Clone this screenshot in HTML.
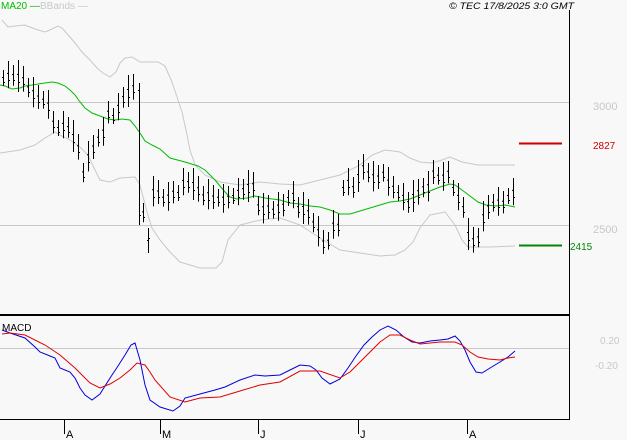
<!DOCTYPE html>
<html><head><meta charset="utf-8"><style>
html,body{margin:0;padding:0;background:#f8f8f8;}
svg{display:block;}
text{font-family:"Liberation Sans",sans-serif;}
</style></head><body>
<svg id="s" width="627" height="440" viewBox="0 0 627 440" xmlns="http://www.w3.org/2000/svg">
<rect width="627" height="440" fill="#f8f8f8"/>
<line x1="0" y1="102.5" x2="569" y2="102.5" stroke="#c8c8c8"/>
<line x1="0" y1="225.5" x2="569" y2="225.5" stroke="#c8c8c8"/>
<line x1="0" y1="348.5" x2="569" y2="348.5" stroke="#c8c8c8"/>
<polyline fill="none" stroke="#c8c8c8" points="2,20 8,27 15,26 25,25 35,29 45,32 52,29 58,26 62,28 70,37 75,43 82,52 90,60 97,68 103,73 110,77 116,72 120,63 125,58 132,57 140,62 158,62 165,66 172,82 178,100 182,112 186,130 190,150 195,165 205,175 220,182 240,185 260,182 280,184 300,185 320,180 340,175 360,165 372,155 385,150 400,152 410,158 420,162 432,163 442,160 450,157 462,162 478,165 515,165"/>
<polyline fill="none" stroke="#c8c8c8" points="0,153 20,150 35,145 45,138 55,132 60,135 70,140 80,147 88,155 95,170 100,180 110,182 120,178 135,177 140,185 147,212 152,228 160,240 170,252 180,262 200,268 216,268 222,262 228,240 240,225 260,220 280,218 300,225 320,238 340,250 360,253 380,256 395,255 405,250 413,242 420,228 430,215 445,212 455,225 462,240 468,247 490,247 515,246"/>
<polyline fill="none" stroke="#00bb00" points="0,85 5,86 12,89 20,88 25,86 32,85 38,84 45,83 52,82 58,83 65,86 70,90 75,95 80,102 85,108 92,113 100,116 108,119 115,120 122,119 130,120 135,126 140,133 145,141 152,145 160,149 170,158 185,162 198,166 205,170 215,180 225,192 230,197 237,199 247,198 255,196 265,198 280,200 290,203 300,204 310,206 320,207 330,210 340,214 350,214 360,211 370,208 380,205 390,202 400,201 410,199 420,195 430,191 440,187 450,184 455,185 462,190 470,196 478,202 486,205 496,206 505,205 515,207"/>
<g id="bars" stroke="#000" fill="none"></g>
<polyline fill="none" stroke="#0000dd" points="2,330 10,333 25,338 35,347 40,352 50,356 55,358 60,368 70,372 75,378 80,388 85,395 92,400 100,394 105,386 112,375 118,366 125,355 131,345 135,343 140,360 145,385 150,400 160,407 173,411 180,406 185,398 200,394 215,390 225,387 240,380 255,375 265,376 280,375 290,370 300,365 310,366 316,370 322,378 330,384 340,379 348,368 356,356 364,345 372,337 380,330 388,326 396,330 404,337 412,342 420,343 430,341 440,340 448,339 455,336 460,341 465,350 470,362 476,372 482,373 490,368 500,362 508,357 515,351"/>
<polyline fill="none" stroke="#dd0000" points="2,334 10,333 25,335 45,345 60,355 75,368 90,383 100,388 110,384 120,378 130,370 137,363 145,365 150,372 155,380 170,397 185,402 200,398 220,397 240,391 260,385 280,382 300,371 320,371 340,378 350,372 360,362 370,352 380,342 390,335 400,335 410,340 420,344 440,342 455,342 462,345 470,352 478,357 488,359 500,360 508,358 515,357"/>
<line x1="0" y1="315" x2="569" y2="315" stroke="#000" stroke-width="2"/>
<line x1="569.5" y1="10" x2="569.5" y2="420" stroke="#000"/>
<line x1="0" y1="419.5" x2="569" y2="419.5" stroke="#000"/>
<g stroke="#000"><line x1="64.5" y1="419" x2="64.5" y2="434"/><line x1="160.5" y1="419" x2="160.5" y2="434"/><line x1="258.5" y1="419" x2="258.5" y2="434"/><line x1="358.5" y1="419" x2="358.5" y2="434"/><line x1="467.5" y1="419" x2="467.5" y2="434"/></g>
<g font-size="11" fill="#000"><text x="66" y="438">A</text><text x="162" y="438">M</text><text x="260" y="438">J</text><text x="360" y="438">J</text><text x="469" y="438">A</text></g>
<line x1="519" y1="143.5" x2="562" y2="143.5" stroke="#cc0000" stroke-width="2"/>
<line x1="519" y1="245.5" x2="562" y2="245.5" stroke="#008800" stroke-width="2"/>
<text x="593" y="149" font-size="10" fill="#cc0000">2827</text>
<text x="570" y="250" font-size="10" fill="#008800">2415</text>
<text x="593" y="110" font-size="11" fill="#c8c8c8">3000</text>
<text x="593" y="233" font-size="11" fill="#c8c8c8">2500</text>
<text x="600" y="344" font-size="10" fill="#c8c8c8">0.20</text>
<text x="595" y="369" font-size="10" fill="#c8c8c8">-0.20</text>
<text x="2" y="331" font-size="10" fill="#000">MACD</text>
<text x="1" y="9" font-size="10" fill="#00bb00">MA20 —</text>
<text x="40" y="9" font-size="10" fill="#c8c8c8">BBands —</text>
<text x="449" y="9" font-size="9" font-style="italic" fill="#000" textLength="125" lengthAdjust="spacingAndGlyphs">© TEC 17/8/2025 3:0 GMT</text>
</svg>
<script>
var mids=[[3,80],[8,78],[13,78],[18,80],[23,82],[28,90],[33,96],[38,100],[43,102],[48,108],[53,125],[58,130],[63,128],[68,130],[73,140],[78,150],[83,175],[88,160],[93,150],[98,140],[103,135],[108,115],[113,118],[118,110],[123,100],[128,95],[133,90],[143,215],[153,195],[158,195],[163,200],[168,200],[173,195],[178,195],[183,185],[188,185],[193,188],[198,192],[203,198],[208,198],[213,200],[218,200],[223,202],[228,200],[233,198],[238,195],[243,192],[248,190],[253,188],[258,208],[263,212],[268,210],[273,212],[278,210],[283,208],[288,200],[293,198],[298,210],[303,212],[308,215],[313,225],[318,235],[323,245],[328,243],[333,228],[338,228],[343,190],[348,185],[353,190],[358,180],[363,170],[368,175],[373,180],[378,180],[383,175],[388,185],[393,190],[398,195],[403,200],[408,205],[413,200],[418,195],[423,190],[428,190],[433,175],[438,178],[443,180],[448,175],[453,190],[458,200],[463,210],[468,238],[473,243],[478,240],[483,220],[488,210],[493,205],[498,205],[503,205],[508,198],[513,195]];
var g=document.getElementById('bars'),h='';
function bar(x,t,b,o,c){h+='<line x1="'+(x+.5)+'" y1="'+t+'" x2="'+(x+.5)+'" y2="'+b+'"/><line x1="'+(x-1)+'" y1="'+(o+.5)+'" x2="'+x+'" y2="'+(o+.5)+'"/><line x1="'+(x+1)+'" y1="'+(c+.5)+'" x2="'+(x+2)+'" y2="'+(c+.5)+'"/>';}
mids.forEach(function(m,i){var hh=10+(i*7%11);bar(m[0],m[1]-hh,m[1]+hh*0.6,m[1]-hh*0.3,m[1]+2);});
bar(139,83,225,90,215);bar(148,228,253,240,238);
g.innerHTML=h;
</script>
</body></html>
